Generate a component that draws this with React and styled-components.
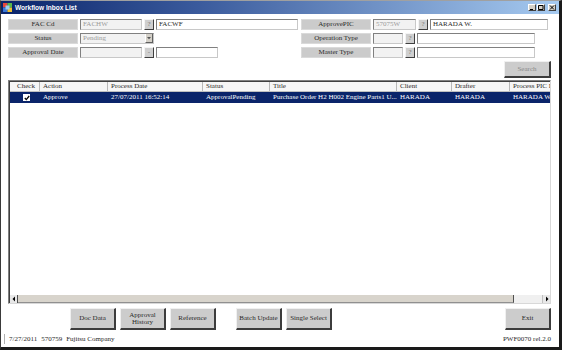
import React from 'react';
import styled, { createGlobalStyle } from 'styled-components';

const GlobalStyle = createGlobalStyle`
  html, body { margin: 0; padding: 0; background: #fff; }
  body { font-family: "Liberation Serif", "Times New Roman", serif; }
  * { box-sizing: border-box; }
`;

const Window = styled.div`
  width: 562px;
  height: 350px;
  display: flex;
  flex-direction: column;
  border-left: 1px solid #3a3a3a;
  border-top: 1px solid #a0a0a0;
  border-right: 3px solid #1a1a1a;
  border-bottom: 3px solid #1a1a1a;
  background: #fff;
  overflow: hidden;
  font-family: "Liberation Serif", "Times New Roman", serif;
  font-size: 7px;
  color: #2a2a2a;
`;

const TitleBar = styled.div`
  height: 13px;
  flex: none;
  display: flex;
  align-items: center;
  gap: 3px;
  padding: 0 3px 0 2px;
  background: linear-gradient(to right, #0a246a 0%, #3a5a9c 35%, #a6caf0 100%);
`;

const TitleText = styled.span`
  font-family: "Liberation Sans", Arial, sans-serif;
  font-weight: bold;
  font-size: 6.5px;
  color: #fff;
  flex: 1;
`;

const WinButtons = styled.div`
  display: flex;
  gap: 1px;
`;

const WinButton = styled.div`
  width: 8px;
  height: 7px;
  background: #d4d0c8;
  border-top: 1px solid #fff;
  border-left: 1px solid #fff;
  border-right: 1px solid #404040;
  border-bottom: 1px solid #404040;
  margin-left: ${p => (p.$gap ? '2px' : '0')};
  position: relative;
`;

const Content = styled.div`
  flex: 1;
  display: flex;
  flex-direction: column;
  padding: 5px 8px 0 7px;
  min-height: 0;
`;

const Form = styled.div`
  display: flex;
  gap: 3px;
`;

const FormColumn = styled.div`
  display: flex;
  flex-direction: column;
  gap: 3px;
`;

const FieldRow = styled.div`
  display: flex;
  gap: 2px;
  height: 11px;
`;

const FieldLabel = styled.div`
  width: 70px;
  height: 11px;
  background: #cbcbcb;
  border: 1px solid #dadada;
  text-align: center;
  line-height: 9px;
  white-space: nowrap;
`;

const TextBox = styled.div`
  width: ${p => p.$w}px;
  height: 11px;
  background: ${p => (p.$disabled ? '#f2f2f2' : '#fff')};
  color: ${p => (p.$disabled ? '#9a9a9a' : '#2a2a2a')};
  border-top: 1px solid #808080;
  border-left: 1px solid #808080;
  border-right: 1px solid #c8c8c8;
  border-bottom: 1px solid #c8c8c8;
  line-height: 9px;
  padding-left: 2px;
  white-space: nowrap;
  overflow: hidden;
`;

const SelectBox = styled(TextBox)`
  display: flex;
  justify-content: space-between;
  padding-right: 0;
`;

const SelectArrow = styled.div`
  width: 8px;
  height: 9px;
  background: #d4d0c8;
  border-left: 1px solid #fff;
  border-right: 1px solid #606060;
  border-bottom: 1px solid #606060;
  display: flex;
  align-items: center;
  justify-content: center;
`;

const SmallButton = styled.div`
  width: 10px;
  height: 11px;
  background: #cfcfcf;
  border-top: 1px solid #f4f4f4;
  border-left: 1px solid #f4f4f4;
  border-right: 1px solid #404040;
  border-bottom: 1px solid #404040;
  color: #7a7a7a;
  font-size: 7px;
  text-align: center;
  line-height: 9px;
`;

const SearchRow = styled.div`
  display: flex;
  justify-content: flex-end;
  margin-top: 3px;
`;

const RaisedButton = styled.div`
  width: ${p => p.$w || 46}px;
  height: ${p => p.$h || 22}px;
  margin-left: ${p => p.$ml || 0}px;
  background: #cccccc;
  border-top: 1px solid #f0f0f0;
  border-left: 1px solid #f0f0f0;
  border-right: 2px solid #3c3c3c;
  border-bottom: 2px solid #3c3c3c;
  color: ${p => (p.$muted ? '#8a8a8a' : '#2a2a2a')};
  display: flex;
  align-items: center;
  justify-content: center;
  text-align: center;
  line-height: 7px;
  font-size: 7px;
`;

const TableFrame = styled.div`
  margin-top: 2px;
  height: 224px;
  flex: none;
  display: flex;
  flex-direction: column;
  border-top: 1px solid #808080;
  border-left: 1px solid #808080;
  border-right: 1px solid #d8d8d8;
  border-bottom: 1px solid #d8d8d8;
  box-shadow: inset 1px 1px 0 #404040;
  padding: 1px 0 0 1px;
  overflow: hidden;
`;

const GridArea = styled.div`
  flex: 1;
  overflow: hidden;
  background: #fff;
`;

const cols = '30px 68px 95px 67px 127px 55px 58px 80px';

const HeaderRow = styled.div`
  display: grid;
  grid-template-columns: ${cols};
  height: 10px;
  background: #f6f6f6;
  border-bottom: 1px solid #c0c0c0;
`;

const HeaderCell = styled.div`
  border-right: 1px solid #b8b8b8;
  padding-left: 3px;
  line-height: 9px;
  white-space: nowrap;
  overflow: hidden;
  text-align: ${p => (p.$center ? 'center' : 'left')};
`;

const DataRow = styled.div`
  display: grid;
  grid-template-columns: ${cols};
  height: 11px;
  background: ${p => (p.$selected ? '#0a246a' : '#fff')};
  color: ${p => (p.$selected ? '#fff' : '#2a2a2a')};
`;

const DataCell = styled.div`
  padding-left: 3px;
  line-height: 11px;
  white-space: nowrap;
  overflow: hidden;
  display: flex;
  align-items: center;
  justify-content: ${p => (p.$center ? 'center' : 'flex-start')};
`;

const CheckBox = styled.div`
  width: 7px;
  height: 7px;
  background: #fff;
  display: flex;
  align-items: center;
  justify-content: center;
`;

const ScrollBar = styled.div`
  height: 8px;
  display: flex;
  flex: none;
  background: #f0f0f0;
`;

const ScrollArrow = styled.div`
  width: 8px;
  height: 8px;
  background: #e8e8e8;
  border-right: ${p => (p.$left ? '1px solid #505050' : 'none')};
  border-left: ${p => (p.$left ? 'none' : '1px solid #c0c0c0')};
  display: flex;
  align-items: center;
  justify-content: center;
`;

const ScrollThumb = styled.div`
  width: 496px;
  height: 8px;
  background: #d8d4cc;
  border-right: 1px solid #505050;
  border-bottom: 1px solid #909090;
`;

const ScrollTrack = styled.div`
  flex: 1;
`;

const ButtonBar = styled.div`
  display: flex;
  margin-top: 4px;
  padding-left: 62px;
  gap: 4px;
`;

const ExitSpacer = styled.div`
  flex: 1;
`;

const Footer = styled.div`
  flex: 1;
  display: flex;
  align-items: center;
  margin-left: -4px;
`;

const FooterTick = styled.div`
  width: 1px;
  height: 10px;
  background: #b0b0b0;
  margin-right: 4px;
`;

const FooterItem = styled.span`
  margin-right: 4px;
  white-space: nowrap;
`;

const FooterVersion = styled.span`
  margin-left: auto;
  white-space: nowrap;
`;

const AppIcon = () => (
  <svg width="9" height="9" viewBox="0 0 9 9">
    <rect x="0" y="0" width="4.5" height="4.5" fill="#e8463a" />
    <rect x="4.5" y="0" width="4.5" height="4.5" fill="#58b848" />
    <rect x="0" y="4.5" width="4.5" height="4.5" fill="#3a78d8" />
    <rect x="4.5" y="4.5" width="4.5" height="4.5" fill="#f0c030" />
    <rect x="2.5" y="2.5" width="4" height="4" fill="#9ad0f0" />
  </svg>
);

const Glyph = ({ d }) => (
  <svg width="6" height="5" viewBox="0 0 6 5" style={{ position: 'absolute', left: 0, top: 0 }}>
    <path d={d} stroke="#000" strokeWidth="1" fill="none" />
  </svg>
);

const Triangle = ({ dir, color = '#000' }) => {
  const pts = {
    left: '4,0.5 4,5.5 1.5,3',
    right: '2,0.5 2,5.5 4.5,3',
    down: '1,2 5,2 3,4.2',
  }[dir];
  return (
    <svg width="6" height="6" viewBox="0 0 6 6">
      <polygon points={pts} fill={color} />
    </svg>
  );
};

const columns = ['Check', 'Action', 'Process Date', 'Status', 'Title', 'Client', 'Drafter', 'Process PIC I'];

export default function App() {
  return (
    <>
      <GlobalStyle />
      <Window>
        <TitleBar>
          <AppIcon />
          <TitleText>Workflow Inbox List</TitleText>
          <WinButtons>
            <WinButton><Glyph d="M1 4.5 H4" /></WinButton>
            <WinButton><Glyph d="M0.5 0.5 H5 V4.5 H0.5 Z" /></WinButton>
            <WinButton $gap><Glyph d="M1 0.5 L5 4.5 M5 0.5 L1 4.5" /></WinButton>
          </WinButtons>
        </TitleBar>
        <Content>
          <Form>
            <FormColumn>
              <FieldRow>
                <FieldLabel>FAC Cd</FieldLabel>
                <TextBox $w={62} $disabled>FACHW</TextBox>
                <SmallButton>?</SmallButton>
                <TextBox $w={142}>FACWF</TextBox>
              </FieldRow>
              <FieldRow>
                <FieldLabel>Status</FieldLabel>
                <SelectBox $w={74} $disabled>
                  <span>Pending</span>
                  <SelectArrow><Triangle dir="down" color="#555" /></SelectArrow>
                </SelectBox>
              </FieldRow>
              <FieldRow>
                <FieldLabel>Approval Date</FieldLabel>
                <TextBox $w={62} $disabled />
                <SmallButton>-</SmallButton>
                <TextBox $w={62} />
              </FieldRow>
            </FormColumn>
            <FormColumn>
              <FieldRow>
                <FieldLabel>ApprovePIC</FieldLabel>
                <TextBox $w={43} $disabled>57075W</TextBox>
                <SmallButton>?</SmallButton>
                <TextBox $w={118}>HARADA W.</TextBox>
              </FieldRow>
              <FieldRow>
                <FieldLabel>Operation Type</FieldLabel>
                <TextBox $w={30} $disabled />
                <SmallButton>?</SmallButton>
                <TextBox $w={118} />
              </FieldRow>
              <FieldRow>
                <FieldLabel>Master Type</FieldLabel>
                <TextBox $w={30} $disabled />
                <SmallButton>?</SmallButton>
                <TextBox $w={118} />
              </FieldRow>
            </FormColumn>
          </Form>
          <SearchRow>
            <RaisedButton $w={47} $h={17} $muted>Search</RaisedButton>
          </SearchRow>
          <TableFrame>
            <GridArea>
              <HeaderRow>
                {columns.map((c, i) => (
                  <HeaderCell key={c} $center={i === 0}>{c}</HeaderCell>
                ))}
              </HeaderRow>
              <DataRow $selected>
                <DataCell $center>
                  <CheckBox>
                    <svg width="6" height="6" viewBox="0 0 6 6">
                      <path d="M0.8 3 L2.3 4.6 L5.2 1" stroke="#000" strokeWidth="1.3" fill="none" />
                    </svg>
                  </CheckBox>
                </DataCell>
                <DataCell>Approve</DataCell>
                <DataCell>27/07/2011 16:52:14</DataCell>
                <DataCell>ApprovalPending</DataCell>
                <DataCell>Purchase Order H2 H002 Engine Parts1 U...</DataCell>
                <DataCell>HARADA</DataCell>
                <DataCell>HARADA</DataCell>
                <DataCell>HARADA W</DataCell>
              </DataRow>
            </GridArea>
            <ScrollBar>
              <ScrollArrow $left><Triangle dir="left" /></ScrollArrow>
              <ScrollThumb />
              <ScrollTrack />
              <ScrollArrow><Triangle dir="right" /></ScrollArrow>
            </ScrollBar>
          </TableFrame>
          <ButtonBar>
            <RaisedButton>Doc Data</RaisedButton>
            <RaisedButton>Approval<br />History</RaisedButton>
            <RaisedButton>Reference</RaisedButton>
            <RaisedButton $ml={16}>Batch Update</RaisedButton>
            <RaisedButton>Single Select</RaisedButton>
            <ExitSpacer />
            <RaisedButton>Exit</RaisedButton>
          </ButtonBar>
          <Footer>
            <FooterTick />
            <FooterItem>7/27/2011</FooterItem>
            <FooterItem>570759</FooterItem>
            <FooterItem>Fujitsu Company</FooterItem>
            <FooterVersion>PWF0070 rel.2.0</FooterVersion>
          </Footer>
        </Content>
      </Window>
    </>
  );
}
